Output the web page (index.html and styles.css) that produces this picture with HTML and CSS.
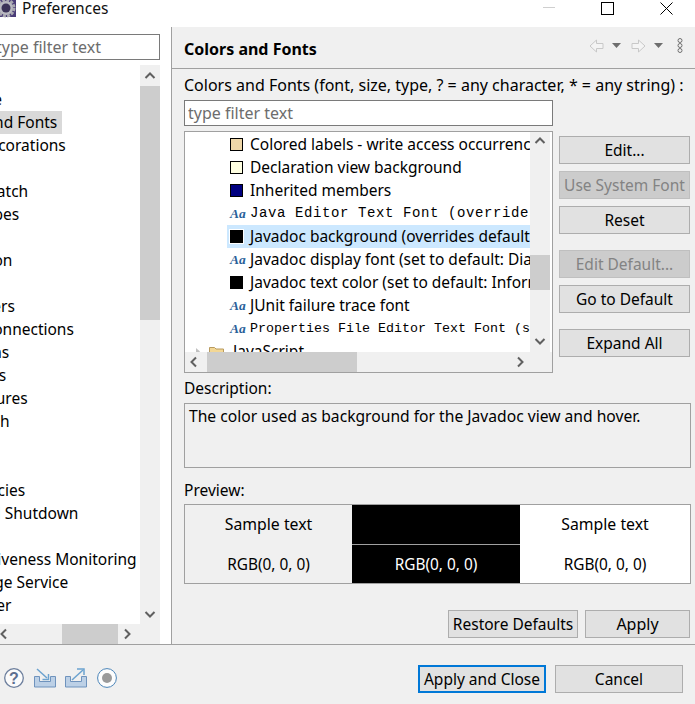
FILE: index.html
```html
<!DOCTYPE html>
<html lang="en">
<head>
<meta charset="utf-8">
<title>Preferences</title>
<link rel="stylesheet" href="styles.css">
</head>
<body>
<div class="window">
  <header class="titlebar">
    <svg class="app-icon" width="17" height="18" viewBox="0 0 17 18"><rect x="0" y="0" width="16" height="17" fill="#4a3c78"/><circle cx="6" cy="8" r="8" fill="none" stroke="#a8a8b0" stroke-width="3" stroke-dasharray="3 1.200"/><circle cx="6" cy="8" r="7" fill="#b9b9c0"/><circle cx="6" cy="8" r="4.500" fill="#3b3358"/></svg>
    <span class="title-text">Preferences</span>
    <div class="win-controls">
      <svg class="win-min" width="12" height="2" viewBox="0 0 12 2"><rect width="12" height="1" fill="#cfcfcf"/></svg>
      <svg class="win-max" width="13" height="13" viewBox="0 0 13 13"><rect x=".5" y=".5" width="12" height="12" fill="none" stroke="#000"/></svg>
      <svg class="win-close" width="13" height="13" viewBox="0 0 13 13"><path d="M.5.5l12 12M12.500.5l-12 12" stroke="#000" fill="none"/></svg>
    </div>
  </header>

  <main class="main">
    <aside class="nav">
      <input class="text-input nav-filter" placeholder="type filter text">
      <div class="nav-tree">
        <div class="nav-body">
          <ul class="nav-list">
            <li class="nav-row lv-a">Appearance</li>
            <li class="nav-row selected"><span class="sel-text">Colors and Fonts</span></li>
            <li class="nav-row lv-b">Label Decorations</li>
            <li class="nav-row"></li>
            <li class="nav-row lv-a">Compare/Patch</li>
            <li class="nav-row lv-a">Content Types</li>
            <li class="nav-row"></li>
            <li class="nav-row lv-c">Globalization</li>
            <li class="nav-row"></li>
            <li class="nav-row lv-a">Link Handlers</li>
            <li class="nav-row lv-c">Network Connections</li>
            <li class="nav-row lv-c">Notifications</li>
            <li class="nav-row lv-a">Perspectives</li>
            <li class="nav-row lv-a">Project Natures</li>
            <li class="nav-row lv-a">Quick Search</li>
            <li class="nav-row"></li>
            <li class="nav-row"></li>
            <li class="nav-row lv-a">Service Policies</li>
            <li class="nav-row lv-a">Startup and Shutdown</li>
            <li class="nav-row"></li>
            <li class="nav-row lv-a">UI Responsiveness Monitoring</li>
            <li class="nav-row lv-d">User Storage Service</li>
            <li class="nav-row lv-a">Web Browser</li>
          </ul>
          <div class="vscroll nav-vscroll">
            <svg class="arrow" width="20" height="21" viewBox="0 0 20 21"><path d="M5.500 13l4.500-4.500 4.500 4.500" fill="none" stroke="#606060" stroke-width="2"/></svg>
            <div class="nav-vthumb"></div>
            <div class="track"></div>
            <svg class="arrow" width="20" height="21" viewBox="0 0 20 21"><path d="M5.500 9l4.500 4.500 4.500-4.500" fill="none" stroke="#606060" stroke-width="2"/></svg>
          </div>
        </div>
        <div class="hscroll nav-hscroll">
          <svg class="arrow" width="8" height="20" viewBox="0 0 8 20"><path d="M6 5.500l-4.500 4.500 4.500 4.500" fill="none" stroke="#606060" stroke-width="2"/></svg>
          <div class="nav-htrack"></div>
          <div class="nav-hthumb"></div>
          <div class="track"></div>
          <svg class="arrow nav-hright" width="10" height="20" viewBox="0 0 10 20"><path d="M2 5.500l4.500 4.500-4.500 4.500" fill="none" stroke="#606060" stroke-width="2"/></svg>
        </div>
      </div>
    </aside>

    <section class="page">
      <div class="page-head">
        <h1 class="page-title">Colors and Fonts</h1>
        <div class="page-tools">
          <svg width="15" height="14" viewBox="0 0 15 14"><path d="M7.500 1L1 7l6.500 6V9.500h6.500v-5H7.500z" fill="#f4f4f4" stroke="#c8c8c8"/></svg>
          <svg class="drop" width="9" height="5" viewBox="0 0 9 5"><path d="M0 0h9L4.500 5z" fill="#6e6e6e"/></svg>
          <svg class="fwd" width="15" height="14" viewBox="0 0 15 14"><path d="M7.500 1L14 7l-6.500 6V9.500H1v-5h6.500z" fill="#f4f4f4" stroke="#c8c8c8"/></svg>
          <svg class="drop" width="9" height="5" viewBox="0 0 9 5"><path d="M0 0h9L4.500 5z" fill="#6e6e6e"/></svg>
          <svg class="menu-dots" width="6" height="15" viewBox="0 0 6 15"><g fill="none" stroke="#707070"><circle cx="3" cy="2.500" r="2"/><circle cx="3" cy="7.500" r="2"/><circle cx="3" cy="12.500" r="2"/></g></svg>
        </div>
      </div>

      <div class="page-body">
        <label class="label filter-label">Colors and Fonts (font, size, type, ? = any character, * = any string) :</label>
        <input class="text-input page-filter" placeholder="type filter text">

        <div class="tree-row-wrap">
          <div class="tree">
            <div class="tree-top">
              <ul class="tree-list">
                <li class="item"><span class="swatch sw-tan"></span>Colored labels - write access occurrences</li>
                <li class="item"><span class="swatch sw-cream"></span>Declaration view background</li>
                <li class="item"><span class="swatch sw-navy"></span>Inherited members</li>
                <li class="item mono-wide"><span class="aa">Aa</span>Java Editor Text Font (overrides default: Text Font)</li>
                <li class="item active"><span class="swatch sw-black sw-active"></span>Javadoc background (overrides default: Information background)</li>
                <li class="item"><span class="aa">Aa</span>Javadoc display font (set to default: Dialog Font)</li>
                <li class="item"><span class="swatch sw-black"></span>Javadoc text color (set to default: Information foreground)</li>
                <li class="item"><span class="aa">Aa</span>JUnit failure trace font</li>
                <li class="item mono-narrow"><span class="aa">Aa</span>Properties File Editor Text Font (set to default)</li>
                <li class="group">
                  <svg class="twisty" width="6" height="7" viewBox="0 0 6 7"><path d="M1 0l4 3.500-4 3.500z" fill="#c0c0c0"/></svg>
                  <svg class="folder" width="15" height="13" viewBox="0 0 15 13"><path d="M.5 2.500h5l1.500 1.500h7.500v8.500H.5z" fill="#f3d795" stroke="#b89a5e"/></svg>
                  JavaScript
                </li>
              </ul>
              <div class="vscroll tree-vscroll">
                <svg class="arrow" width="20" height="21" viewBox="0 0 20 21"><path d="M5.500 11l4.500-4.500 4.500 4.500" fill="none" stroke="#606060" stroke-width="2"/></svg>
                <div class="tree-vgap"></div>
                <div class="tree-vthumb"></div>
                <div class="track"></div>
                <svg class="arrow" width="20" height="21" viewBox="0 0 20 21"><path d="M5.500 8l4.500 4.500 4.500-4.500" fill="none" stroke="#606060" stroke-width="2"/></svg>
              </div>
            </div>
            <div class="hscroll tree-hscroll">
              <svg class="arrow arrow-left" width="22" height="20" viewBox="0 0 22 20"><path d="M11 5.500l-4.500 4.500 4.500 4.500" fill="none" stroke="#606060" stroke-width="2"/></svg>
              <div class="tree-hthumb"></div>
              <div class="track"></div>
              <svg class="arrow tree-hright" width="20" height="20" viewBox="0 0 20 20"><path d="M8 5.500l4.500 4.500-4.500 4.500" fill="none" stroke="#606060" stroke-width="2"/></svg>
            </div>
          </div>

          <div class="side-buttons">
            <button class="btn">Edit...</button>
            <button class="btn off">Use System Font</button>
            <button class="btn">Reset</button>
            <button class="btn off spaced">Edit Default...</button>
            <button class="btn">Go to Default</button>
            <button class="btn spaced">Expand All</button>
          </div>
        </div>

        <div class="label desc-label">Description:</div>
        <div class="desc-box">The color used as background for the Javadoc view and hover.</div>

        <div class="label preview-label">Preview:</div>
        <div class="preview">
          <div class="pv-col pv-gray"><div class="pv-cell">Sample text</div><div class="pv-cell pv-rgb">RGB(0, 0, 0)</div></div>
          <div class="pv-col pv-black"><div class="pv-cell pv-split"></div><div class="pv-cell pv-rgb">RGB(0, 0, 0)</div></div>
          <div class="pv-col pv-white"><div class="pv-cell">Sample text</div><div class="pv-cell pv-rgb">RGB(0, 0, 0)</div></div>
        </div>

        <div class="page-actions">
          <button class="btn restore">Restore Defaults</button>
          <button class="btn apply">Apply</button>
        </div>
      </div>
    </section>
  </main>

  <footer class="footer">
    <div class="foot-icons">
      <svg width="20" height="20" viewBox="0 0 20 20"><circle cx="10" cy="10" r="9.300" fill="#fbfbfb" stroke="#6d7f9d" stroke-width="1.300"/><text class="help-q" x="10" y="15.500" text-anchor="middle">?</text></svg>
      <svg class="ic-import" width="22" height="20" viewBox="0 0 22 20"><path d="M.5 8.500h5v5h11v-5h5v10.500H.5z" fill="#bcd0e6" stroke="#6f93bd"/><path d="M3 1l10 9" stroke="#6ba2cf" stroke-width="1.500" fill="none"/><path d="M14.500 6v5.500H8.500" stroke="#6ba2cf" stroke-width="1.500" fill="none"/></svg>
      <svg class="ic-export" width="22" height="20" viewBox="0 0 22 20"><path d="M.5 8.500h5v5h11v-5h5v10.500H.5z" fill="#bcd0e6" stroke="#6f93bd"/><path d="M7 12l11-10" stroke="#6ba2cf" stroke-width="1.500" fill="none"/><path d="M12 1h7v6" stroke="#6ba2cf" stroke-width="1.500" fill="none"/></svg>
      <svg class="ic-rec" width="20" height="20" viewBox="0 0 20 20"><circle cx="10" cy="10" r="9.400" fill="#fdfdfd" stroke="#4a84b8"/><circle cx="10" cy="10" r="5" fill="#9a9a9a"/></svg>
    </div>
    <div class="foot-buttons">
      <button class="btn primary">Apply and Close</button>
      <button class="btn cancel">Cancel</button>
    </div>
  </footer>
</div>
</body>
</html>
```

FILE: styles.css
```css
* { box-sizing: border-box; }
html, body { margin: 0; padding: 0; }
body {
  width: 695px;
  height: 704px;
  overflow: hidden;
  font-family: "Noto Sans", "Open Sans", sans-serif;
  font-size: 15.5px;
  color: #000;
  background: #f0f0f0;
}
ul { list-style: none; margin: 0; padding: 0; }

.window { display: flex; flex-direction: column; width: 695px; height: 704px; }

.titlebar {
  height: 27px;
  flex: none;
  background: #fff;
  display: flex;
  align-items: flex-start;
}
.app-icon { flex: none; }
.title-text { margin-left: 5px; line-height: 17px; color: #111; }
.win-controls { margin-left: auto; display: flex; align-items: flex-start; padding-top: 2px; padding-right: 22px; }
.win-min { margin-top: 5px; }
.win-max { margin-left: 46px; }
.win-close { margin-left: 46px; }

.main { flex: 1; display: flex; min-height: 0; }

.nav {
  width: 172px;
  flex: none;
  background: #fff;
  border-right: 1px solid #a0a0a0;
  padding-top: 7px;
  padding-right: 11px;
  display: flex;
  flex-direction: column;
  overflow: hidden;
}
.text-input {
  display: block;
  height: 26px;
  border: 1px solid #7a7a7a;
  background: #fff;
  font-family: inherit;
  font-size: 16px;
  padding: 0 3px;
  outline: none;
}
.text-input::placeholder { color: #6d6d6d; opacity: 1; }
.nav-filter { width: 168px; margin-left: -8px; flex: none; }

.nav-tree { margin-top: 5px; flex: 1; display: flex; flex-direction: column; min-height: 0; width: 160px; }
.nav-body { flex: 1; display: flex; min-height: 0; }
.nav-list { width: 140px; flex: none; overflow: hidden; padding-top: 23px; }
.nav-row { height: 23px; line-height: 23px; white-space: nowrap; }
.lv-a { margin-left: -85px; }
.lv-b { margin-left: -65px; }
.lv-c { margin-left: -83px; }
.lv-d { margin-left: -82px; }
.selected { width: 62px; background: #d9d9d9; }
.sel-text { display: block; margin-left: -65px; }

.vscroll { display: flex; flex-direction: column; width: 20px; flex: none; background: #f0f0f0; }
.arrow { display: block; flex: none; }
.track { flex: 1; }
.nav-vthumb { height: 234px; background: #cdcdcd; flex: none; }
.hscroll { display: flex; height: 20px; flex: none; background: #f0f0f0; }
.nav-htrack { width: 54px; flex: none; }
.nav-hthumb { width: 56px; background: #cdcdcd; flex: none; }
.nav-hright { margin-right: 27px; }

.page { flex: 1; min-width: 0; display: flex; flex-direction: column; }
.page-head {
  height: 42px;
  flex: none;
  border-bottom: 1px solid #a0a0a0;
  display: flex;
  align-items: flex-start;
  padding-left: 12px;
}
.page-title { margin: 0; font-size: 16px; font-weight: 700; line-height: 22px; padding-top: 11px; }
.page-tools { margin-left: auto; display: flex; align-items: center; padding: 11px 12px 0 0; }
.page-tools .drop { margin-left: 8px; }
.page-tools .fwd { margin-left: 10px; }
.page-tools .menu-dots { margin-left: 14px; }

.page-body { padding-left: 12px; flex: 1; display: flex; flex-direction: column; min-height: 0; }
.label { line-height: 22px; white-space: nowrap; }
.filter-label { height: 22px; margin-top: 5px; font-size: 16px; }
.page-filter { width: 369px; margin-top: 4px; flex: none; }

.tree-row-wrap { display: flex; margin-top: 5px; flex: none; }
.tree { width: 369px; height: 242px; border: 1px solid #a0a0a0; background: #fff; display: flex; flex-direction: column; flex: none; }
.tree-top { flex: 1; display: flex; min-height: 0; padding-right: 2px; }
.tree-list { flex: 1; min-width: 0; overflow: hidden; padding-top: 1px; white-space: nowrap; }
.item { height: 23px; line-height: 23px; margin-left: 42px; padding-left: 3px; display: flex; align-items: center; }
.item.mono-wide { font-family: "Liberation Mono", monospace; font-size: 14px; letter-spacing: 0.6px; }
.item.mono-narrow { font-family: "Liberation Mono", monospace; font-size: 13.33px; }
.item.active { background: #cce8ff; }
.swatch { width: 13px; height: 13px; flex: none; margin-right: 7px; border: 1px solid #000; }
.sw-tan { background: #efd7a8; }
.sw-cream { background: #ffffe1; }
.sw-navy { background: #000080; }
.sw-black { background: #000; }
.sw-active { box-shadow: 0 0 0 1px #fff; }
.aa { width: 20px; flex: none; font-family: "Liberation Serif", serif; font-style: italic; font-weight: 700; font-size: 13.5px; color: #2a6099; letter-spacing: 0; }
.group { height: 23px; line-height: 23px; display: flex; align-items: center; padding-left: 10px; }
.twisty { margin-right: 8px; }
.folder { margin-right: 9px; }

.tree-vgap { height: 102px; flex: none; }
.tree-vthumb { height: 35px; flex: none; background: #cdcdcd; }
.tree-hthumb { width: 150px; flex: none; background: #cdcdcd; }
.tree-hright { margin-right: 22px; }

.side-buttons { display: flex; flex-direction: column; margin-left: 6px; width: 131px; padding-top: 5px; gap: 7px; }
.btn {
  height: 28px;
  border: 1px solid #adadad;
  background: #e1e1e1;
  font: inherit;
  color: #000;
  padding: 0;
  display: block;
  flex: none;
}
.off { background: #cccccc; border-color: #bfbfbf; color: #838383; }
.spaced { margin-top: 9px; }

.desc-label { margin-top: 4px; height: 22px; }
.desc-box { width: 507px; height: 65px; margin-top: 4px; border: 1px solid #a0a0a0; padding: 1px 4px; line-height: 22px; font-size: 15.65px; flex: none; }
.preview-label { margin-top: 11px; height: 22px; }
.preview { width: 507px; height: 80px; margin-top: 3px; border: 1px solid #a0a0a0; display: flex; flex: none; }
.pv-col { display: flex; flex-direction: column; text-align: center; }
.pv-gray { width: 167px; background: #f0f0f0; }
.pv-black { width: 168px; background: #000; color: #fff; }
.pv-white { flex: 1; background: #fff; }
.pv-cell { height: 40px; line-height: 38px; font-size: 15.8px; }
.pv-rgb { height: 38px; line-height: 40px; font-size: 15.4px; }
.pv-split { border-bottom: 1px solid #a0a0a0; }

.page-actions { display: flex; margin-top: 26px; flex: none; }
.restore { width: 130px; margin-left: 264px; }
.apply { width: 105px; margin-left: 7px; font-size: 16px; }

.footer {
  height: 60px;
  flex: none;
  border-top: 1px solid #a0a0a0;
  display: flex;
  align-items: flex-start;
}
.foot-icons { display: flex; padding: 23px 0 0 4px; }
.ic-import { margin-left: 10px; }
.ic-export { margin-left: 9px; }
.ic-rec { margin-left: 10px; }
.help-q { font-family: "Liberation Sans", sans-serif; font-weight: 700; font-size: 16px; fill: #5d6f90; }
.foot-buttons { margin-left: auto; display: flex; padding: 20px 12px 0 0; gap: 9px; }
.primary { width: 128px; border: 2px solid #0078d7; }
.cancel { width: 128px; }
```
